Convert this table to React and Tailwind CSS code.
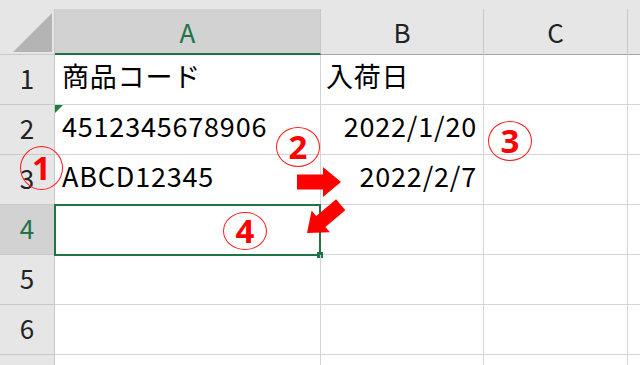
import React from "react";

const font = { fontFamily: '"Noto Sans CJK JP", "Noto Sans", sans-serif' };

const cols = [
  { key: "A", w: "w-[266px]" },
  { key: "B", w: "w-[163px]" },
  { key: "C", w: "w-[144px]" },
];

const rows = [
  { n: 1, A: "商品コード", B: "入荷日" },
  { n: 2, A: "4512345678906", B: "2022/1/20", flag: true },
  { n: 3, A: "ABCD12345", B: "2022/2/7" },
  { n: 4, selected: true },
  { n: 5 },
  { n: 6 },
  { n: 7, hideNum: true },
];

const Circled = ({ n, className }) => (
  <div
    className={`absolute flex items-center justify-center rounded-[50%] border-[1.5px] border-[#ff1a1a] pb-px text-[33px] font-bold leading-none text-[#ff0000] ${className}`}
    style={{ fontFamily: '"Noto Sans", sans-serif' }}
  >
    {n}
  </div>
);

// block arrow, tip at the origin pointing to +x
const arrowPts = "0,0 -18,-15 -18,-7.5 -44,-7.5 -44,7.5 -18,7.5 -18,15";

export default function App() {
  return (
    <div className="relative h-[365px] w-[640px] overflow-hidden bg-white" style={font}>
      <div className="h-[9px] bg-[#e6e6e6]" />

      {/* column headers */}
      <div className="flex h-[46px]">
        <div className="relative w-[55px] shrink-0 border-r border-b border-[#c8c8c8] bg-[#e6e6e6]">
          <svg className="absolute left-0 top-0" width="55" height="46">
            <polygon points="13,43 52,4 52,43" fill="#b4b4b4" />
          </svg>
        </div>
        {cols.map((c) => (
          <div
            key={c.key}
            className={`${c.w} flex shrink-0 items-center justify-center border-r border-[#c8c8c8] text-[26px] ${
              c.key === "A"
                ? "border-b-2 border-b-[#217346] bg-[#d2d2d2] text-[#217346]"
                : "border-b border-b-[#a6a6a6] bg-[#e6e6e6] text-[#222]"
            }`}
          >
            {c.key}
          </div>
        ))}
        <div className="flex-1 border-b border-b-[#a6a6a6] bg-[#e6e6e6]" />
      </div>

      {/* sheet rows */}
      {rows.map((r) => (
        <div key={r.n} className="flex h-[50px]">
          <div
            className={`flex w-[55px] shrink-0 items-center justify-center border-r border-b border-[#c8c8c8] pb-1 text-[26px] ${
              r.selected ? "bg-[#d2d2d2] text-[#217346]" : "bg-[#e6e6e6] text-[#222]"
            }`}
          >
            {!r.hideNum && r.n}
          </div>
          <div className="relative flex w-[266px] shrink-0 items-center border-r border-b border-[#d4d4d4] pb-1.5 pl-[7px] text-[27px] tracking-[0.8px] text-black">
            {r.flag && (
              <svg className="absolute left-0 top-0" width="8" height="8">
                <polygon points="0,0 8,0 0,8" fill="#1a7f37" />
              </svg>
            )}
            {r.A}
            {r.selected && (
              <div className="absolute -top-px -left-px h-[52px] w-[267px] border-2 border-[#217346]">
                <div className="absolute -right-[4px] -bottom-[4px] h-[6px] w-[6px] bg-[#217346]" />
              </div>
            )}
          </div>
          <div className="flex w-[163px] shrink-0 items-center justify-end border-r border-b border-[#d4d4d4] pb-1.5 pr-[6px] text-[27px] tracking-[0.8px] text-black">
            {r.n === 1 ? <span className="mr-auto pl-[5px]">{r.B}</span> : r.B}
          </div>
          <div className="w-[144px] shrink-0 border-r border-b border-[#d4d4d4]" />
          <div className="flex-1 border-b border-[#d4d4d4]" />
        </div>
      ))}

      {/* callouts */}
      <Circled n="1" className="left-[20px] top-[146px] h-[44px] w-[43px]" />
      <Circled n="2" className="left-[276px] top-[127px] h-[40px] w-[44px]" />
      <Circled n="3" className="left-[488px] top-[121px] h-[40px] w-[44px]" />
      <Circled n="4" className="left-[223px] top-[212px] h-[38px] w-[44px]" />

      <svg className="pointer-events-none absolute left-0 top-0" width="640" height="365">
        <polygon points={arrowPts} fill="#ff0000" transform="translate(341 182)" />
        <polygon points={arrowPts} fill="#ff0000" transform="translate(307 233) rotate(140) scale(1 0.95)" />
      </svg>
    </div>
  );
}
